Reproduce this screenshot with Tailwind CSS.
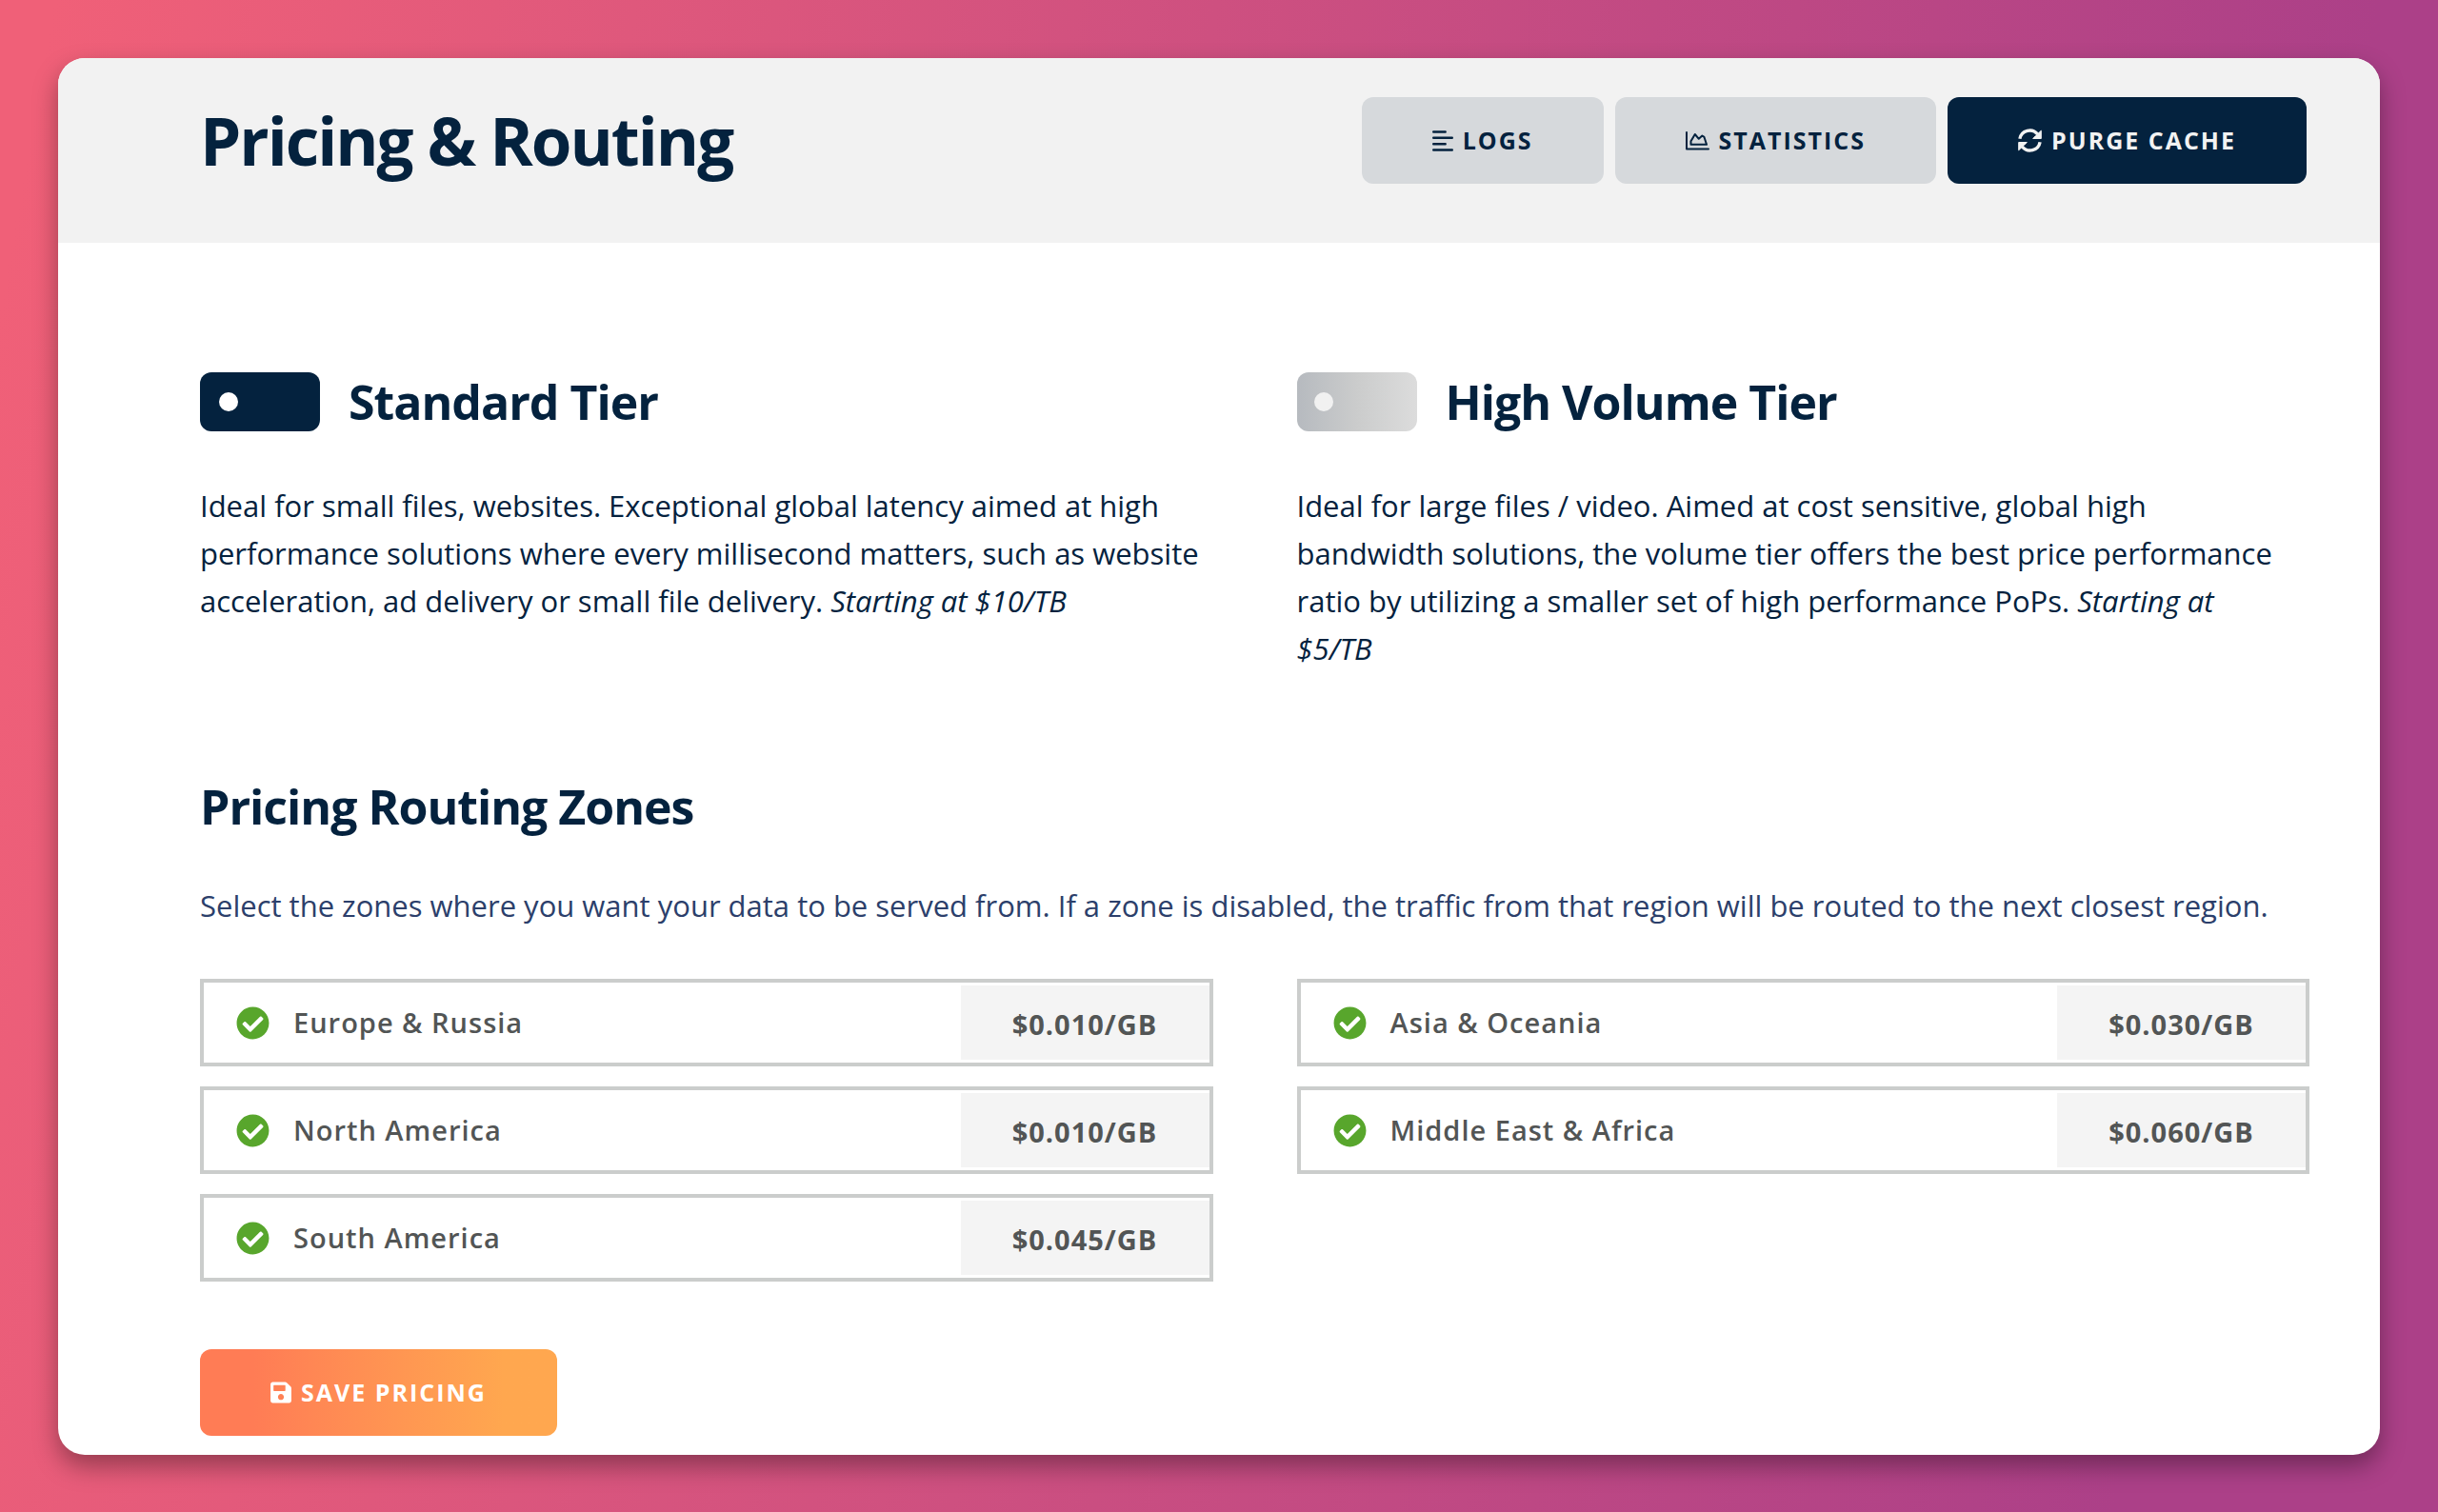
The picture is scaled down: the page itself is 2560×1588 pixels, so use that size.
<!DOCTYPE html>
<html lang="en">
<head>
    <meta charset="UTF-8">
    <meta name="viewport" content="width=device-width, initial-scale=1.0">
    <title>Pricing &amp; Routing</title>
    <script src="https://cdn.jsdelivr.net/npm/@tailwindcss/browser@4"></script>
</head>
<body class="min-h-screen bg-linear-[100deg,#f06078_2%,#ac4088_88%] p-[61px] font-['Open_Sans',sans-serif] text-[#04223e]">
    <svg class="hidden" xmlns="http://www.w3.org/2000/svg">
        <symbol id="check" viewBox="0 0 512 512">
            <path fill="currentColor" d="M504 256c0 136.967-111.033 248-248 248S8 392.967 8 256 119.033 8 256 8s248 111.033 248 248zM227.314 387.314l184-184c6.248-6.248 6.248-16.379 0-22.627l-22.627-22.627c-6.248-6.249-16.379-6.249-22.628 0L216 308.118l-70.059-70.059c-6.248-6.248-16.379-6.248-22.628 0l-22.627 22.627c-6.248 6.248-6.248 16.379 0 22.627l104 104c6.249 6.249 16.379 6.249 22.628.001z"/>
        </symbol>
    </svg>

    <div class="overflow-hidden rounded-[28px] bg-white shadow-[0_12px_26px_rgba(0,0,0,0.35)]">
        <header class="flex items-start justify-between bg-[#f2f2f2] pt-[41px] pr-[77px] pb-[62px] pl-[149px]">
            <h1 class="text-[69px] leading-[91px] font-bold tracking-[-2px]">Pricing &amp; Routing</h1>
            <div class="flex gap-3 text-[25px] leading-[35px] font-bold tracking-[2px]">
                <button type="button" class="flex h-[91px] items-center gap-[10px] rounded-xl bg-[#d6d9dc] px-[74px] uppercase">
                    <svg class="h-6 w-[22px]" viewBox="0 0 22 24" fill="none" stroke="currentColor" stroke-width="2.4" stroke-linecap="round">
                        <path d="M1.200 2.500h12.500M1.200 8.800h19.600M1.200 15.200h12.500M1.200 21.500h19.600"/>
                    </svg>
                    Logs
                </button>
                <button type="button" class="flex h-[91px] items-center gap-[10px] rounded-xl bg-[#d6d9dc] px-[74px] uppercase">
                    <svg class="h-5 w-[25px]" viewBox="0 0 25 20" fill="none" stroke="currentColor" stroke-width="2" stroke-linecap="round" stroke-linejoin="round">
                        <path d="M1 1v17.500h23M5.500 13.800v-3.500l4.300-7.300 4 4.800 3.600-3.300 2 1.300 2.600 8z"/>
                    </svg>
                    Statistics
                </button>
                <button type="button" class="flex h-[91px] items-center gap-[10px] rounded-xl bg-[#04223e] px-[74px] text-[#f2f2f2] uppercase">
                    <svg class="size-[25px]" viewBox="0 0 25 25" fill="none" stroke="currentColor" stroke-width="3.4">
                        <path d="M1.900 10.800A10.600 10.600 0 0 1 20.600 6M23.100 14.200A10.600 10.600 0 0 1 4.400 19"/>
                        <path fill="currentColor" stroke-width="1" stroke-linejoin="round" d="M24.300 2.200v8.300h-8.600l3-3zM.700 22.800v-8.300h8.600l-3 3z"/>
                    </svg>
                    Purge Cache
                </button>
            </div>
        </header>

        <main class="pt-[136px] pr-[74px] pb-5 pl-[149px]">
            <!-- Tiers -->
            <div class="grid grid-cols-2 gap-x-[88px]">
                <section>
                    <div class="flex items-center gap-[30px]">
                        <button type="button" role="switch" aria-checked="true" aria-label="Standard Tier" class="flex h-[62px] w-[126px] items-center rounded-xl bg-[#04223e] pl-5">
                            <span class="size-5 rounded-full bg-white"></span>
                        </button>
                        <h2 class="text-[50px] leading-[62px] font-bold tracking-[-1px]">Standard Tier</h2>
                    </div>
                    <p class="mt-[53px] pr-3 text-[31px] leading-[50px]">Ideal for small files, websites. Exceptional global latency aimed at high performance solutions where every millisecond matters, such as website acceleration, ad delivery or small file delivery. <em>Starting at $10/TB</em></p>
                </section>
                <section>
                    <div class="flex items-center gap-[30px]">
                        <button type="button" role="switch" aria-checked="false" aria-label="High Volume Tier" class="flex h-[62px] w-[126px] items-center rounded-xl bg-linear-to-r from-[#b6babf] via-[#cbcccc] to-[#dcdcdc] pl-[18px]">
                            <span class="size-5 rounded-full bg-[#f1f1f1]"></span>
                        </button>
                        <h2 class="text-[50px] leading-[62px] font-bold tracking-[-1px]">High Volume Tier</h2>
                    </div>
                    <p class="mt-[53px] pr-5 text-[31px] leading-[50px]">Ideal for large files / video. Aimed at cost sensitive, global high bandwidth solutions, the volume tier offers the best price performance ratio by utilizing a smaller set of high performance PoPs. <em>Starting at $5/TB</em></p>
                </section>
            </div>

            <!-- Zones -->
            <h2 class="mt-[110px] text-[50px] leading-[62px] font-bold tracking-[-1px]">Pricing Routing Zones</h2>
            <p class="mt-[48px] text-[31px] leading-[50px] text-[#2c3f6b]">Select the zones where you want your data to be served from. If a zone is disabled, the traffic from that region will be routed to the next closest region.</p>

            <div class="mt-[52px] grid grid-cols-2 gap-x-[88px] gap-y-[21px] text-[29px] leading-[40px] tracking-[1px] text-[#525555]">
                <div class="flex h-[92px] items-center border-4 border-[#cbcdcc] py-[3px] pl-[34px]">
                    <svg class="size-[35px] text-[#58a62c]"><use href="#check"/></svg>
                    <span class="ml-[25px] font-semibold">Europe &amp; Russia</span>
                    <span class="ml-auto flex h-full w-[261px] items-center justify-center bg-[#f4f4f4] pt-1 font-bold">$0.010/GB</span>
                </div>
                <div class="flex h-[92px] items-center border-4 border-[#cbcdcc] py-[3px] pl-[34px]">
                    <svg class="size-[35px] text-[#58a62c]"><use href="#check"/></svg>
                    <span class="ml-[25px] font-semibold">Asia &amp; Oceania</span>
                    <span class="ml-auto flex h-full w-[261px] items-center justify-center bg-[#f4f4f4] pt-1 font-bold">$0.030/GB</span>
                </div>
                <div class="flex h-[92px] items-center border-4 border-[#cbcdcc] py-[3px] pl-[34px]">
                    <svg class="size-[35px] text-[#58a62c]"><use href="#check"/></svg>
                    <span class="ml-[25px] font-semibold">North America</span>
                    <span class="ml-auto flex h-full w-[261px] items-center justify-center bg-[#f4f4f4] pt-1 font-bold">$0.010/GB</span>
                </div>
                <div class="flex h-[92px] items-center border-4 border-[#cbcdcc] py-[3px] pl-[34px]">
                    <svg class="size-[35px] text-[#58a62c]"><use href="#check"/></svg>
                    <span class="ml-[25px] font-semibold">Middle East &amp; Africa</span>
                    <span class="ml-auto flex h-full w-[261px] items-center justify-center bg-[#f4f4f4] pt-1 font-bold">$0.060/GB</span>
                </div>
                <div class="flex h-[92px] items-center border-4 border-[#cbcdcc] py-[3px] pl-[34px]">
                    <svg class="size-[35px] text-[#58a62c]"><use href="#check"/></svg>
                    <span class="ml-[25px] font-semibold">South America</span>
                    <span class="ml-auto flex h-full w-[261px] items-center justify-center bg-[#f4f4f4] pt-1 font-bold">$0.045/GB</span>
                </div>
            </div>

            <button type="button" class="mt-[71px] flex h-[91px] items-center gap-[10px] rounded-xl bg-linear-to-r from-[#ff7c55] from-15% to-[#ffa74f] to-85% px-[74px] text-[25px] leading-[35px] font-bold tracking-[2px] text-white uppercase">
                <svg class="h-[25px] w-[22px]" viewBox="0 0 448 512" fill="currentColor">
                    <path d="M433.941 129.941l-83.882-83.882A48 48 0 0 0 316.118 32H48C21.490 32 0 53.490 0 80v352c0 26.510 21.490 48 48 48h352c26.510 0 48-21.490 48-48V163.882a48 48 0 0 0-14.059-33.941zM224 416c-35.346 0-64-28.654-64-64 0-35.346 28.654-64 64-64s64 28.654 64 64c0 35.346-28.654 64-64 64zm96-304.520V212c0 6.627-5.373 12-12 12H76c-6.627 0-12-5.373-12-12V108c0-6.627 5.373-12 12-12h228.520c3.183 0 6.235 1.264 8.485 3.515l3.480 3.480A11.996 11.996 0 0 1 320 111.480z"/>
                </svg>
                Save Pricing
            </button>
        </main>
    </div>
</body>
</html>
